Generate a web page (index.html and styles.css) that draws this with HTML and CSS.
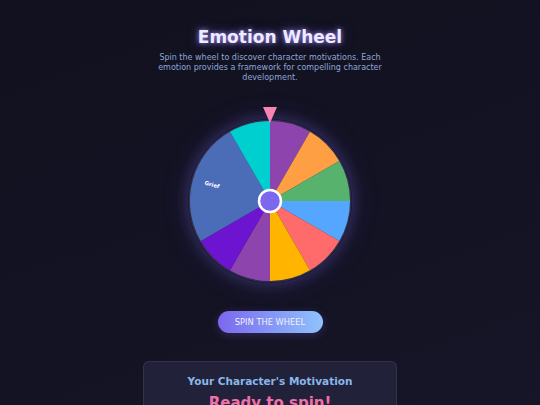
FILE: index.html
```html
<!DOCTYPE html>
<html lang="en">
<head>
<meta charset="utf-8">
<title>Emotion Wheel</title>
<link rel="stylesheet" href="styles.css">
</head>
<body>
<main class="page">
  <h1 class="title">Emotion Wheel</h1>
  <p class="subtitle">Spin the wheel to discover character motivations. Each emotion provides a framework for compelling character development.</p>
  <div class="wheel-wrap">
    <div class="pointer"></div>
    <div class="wheel">
      <svg width="164" height="164" viewBox="0 0 164 164">
        <circle cx="82" cy="82" r="81.5" fill="#322f4c"/>
        <path d="M82 82 L82 2 A80 80 0 0 1 122 12.72 Z" fill="#8e44ad"/>
        <path d="M82 82 L122 12.72 A80 80 0 0 1 151.28 42 Z" fill="#ff9f43"/>
        <path d="M82 82 L151.28 42 A80 80 0 0 1 162 82 Z" fill="#56b26c"/>
        <path d="M82 82 L162 82 A80 80 0 0 1 151.28 122 Z" fill="#54a6ff"/>
        <path d="M82 82 L151.28 122 A80 80 0 0 1 122 151.28 Z" fill="#ff6b6b"/>
        <path d="M82 82 L122 151.28 A80 80 0 0 1 82 162 Z" fill="#ffb400"/>
        <path d="M82 82 L82 162 A80 80 0 0 1 42 151.28 Z" fill="#8e44ad"/>
        <path d="M82 82 L42 151.28 A80 80 0 0 1 12.72 122 Z" fill="#6c14d0"/>
        <path d="M82 82 L12.72 122 A80 80 0 0 1 42 12.72 Z" fill="#4b6cb7"/>
        <path d="M82 82 L42 12.72 A80 80 0 0 1 82 2 Z" fill="#00cfcf"/>
        <text class="seg-label" x="0" y="0" transform="translate(23.5 67.5) rotate(15)" text-anchor="middle">Grief</text>
        <circle cx="82" cy="82" r="11" fill="#7b68ee" stroke="#ffffff" stroke-width="2.5"/>
      </svg>
    </div>
  </div>
  <button class="spin-btn">SPIN THE WHEEL</button>
  <section class="result">
    <h2 class="result-title">Your Character's Motivation</h2>
    <p class="result-value">Ready to spin!</p>
  </section>
</main>
</body>
</html>
```

FILE: styles.css
```css
html, body {
  margin: 0;
  padding: 0;
}
body {
  background: linear-gradient(160deg, #12111f 0%, #141324 60%, #171628 100%);
  min-height: 405px;
  font-family: "DejaVu Sans", Verdana, sans-serif;
  overflow: hidden;
}
.page {
  display: flex;
  flex-direction: column;
  align-items: center;
  padding-top: 27px;
}
.title {
  margin: 0;
  font-size: 17px;
  line-height: 21px;
  font-weight: bold;
  color: #eeeaff;
  text-shadow: 0 0 5px rgba(170, 150, 255, 0.9), 0 0 12px rgba(123, 104, 238, 0.5);
}
.subtitle {
  margin: 5px 0 0;
  width: 240px;
  text-align: center;
  font-size: 8px;
  line-height: 10px;
  color: #8ea7d6;
}
.wheel-wrap {
  position: relative;
  margin-top: 36px;
  width: 164px;
  height: 164px;
}
.wheel {
  width: 164px;
  height: 164px;
  border-radius: 50%;
  box-shadow: 0 0 14px rgba(123, 104, 238, 0.35), 0 0 30px rgba(123, 104, 238, 0.15);
}
.wheel svg {
  display: block;
}
.seg-label {
  font-family: "DejaVu Sans", sans-serif;
  font-size: 5.5px;
  font-weight: bold;
  fill: #ffffff;
}
.pointer {
  position: absolute;
  top: -12px;
  left: 74.5px;
  width: 0;
  height: 0;
  border-left: 7.5px solid transparent;
  border-right: 7.5px solid transparent;
  border-top: 16px solid #f785b4;
  z-index: 2;
}
.spin-btn {
  margin-top: 28px;
  width: 105px;
  height: 22px;
  border: none;
  border-radius: 11px;
  background: linear-gradient(90deg, #7b68ee 0%, #8fc3fb 100%);
  color: #f2f0ff;
  font-family: "DejaVu Sans", sans-serif;
  font-size: 8.3px;
  padding: 0;
  box-shadow: 0 2px 8px rgba(123, 104, 238, 0.25);
}
.result {
  margin-top: 28px;
  width: 254px;
  box-sizing: border-box;
  padding: 13px 10px 20px;
  background: #22213a;
  border: 1px solid rgba(255, 255, 255, 0.08);
  border-radius: 6px;
  text-align: center;
}
.result-title {
  margin: 0;
  font-size: 10.5px;
  line-height: 13px;
  font-weight: bold;
  color: #8ab6ea;
}
.result-value {
  margin: 6px 0 0;
  font-size: 15px;
  line-height: 18px;
  font-weight: bold;
  color: #f070a8;
}
```
